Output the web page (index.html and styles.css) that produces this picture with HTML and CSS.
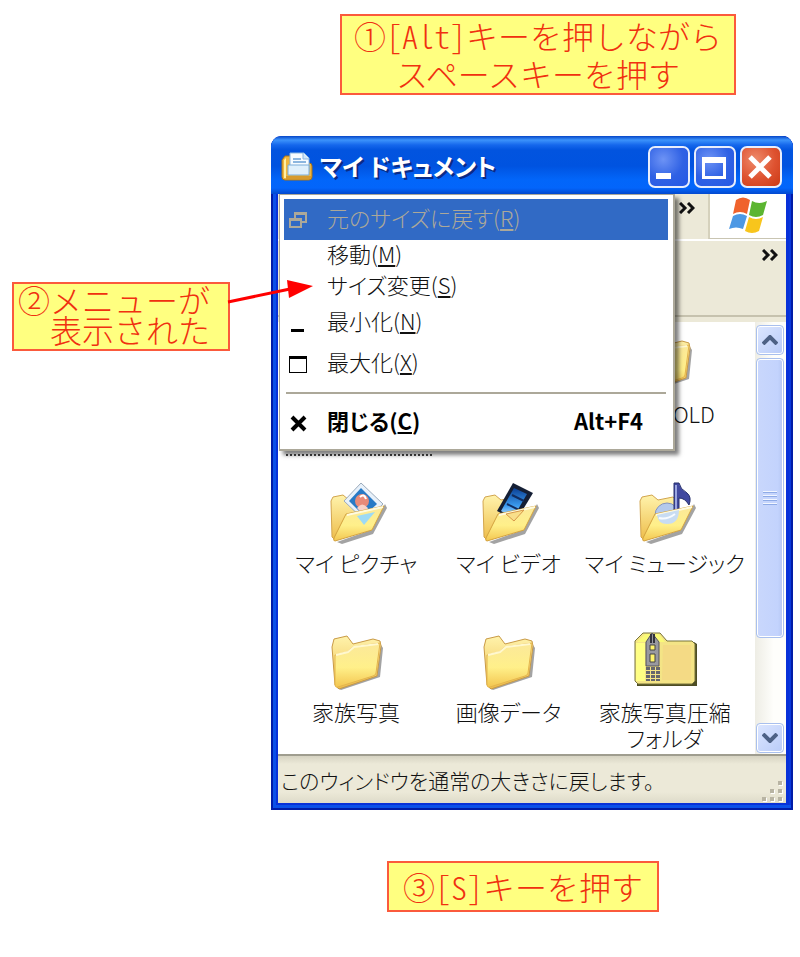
FILE: index.html
```html
<!DOCTYPE html>
<html lang="ja">
<head>
  <meta charset="UTF-8" />
  <meta name="viewport" content="width=device-width, initial-scale=1" />
  <title>マイ ドキュメント</title>
  <link rel="stylesheet" href="styles.css">
</head>
<body>
  <!-- shared icon shapes -->
  <svg class="defs" aria-hidden="true">
    <defs>
      <linearGradient id="paper" x1="0" y1="0" x2="0" y2="1">
        <stop offset="0" stop-color="#fbe89a" />
        <stop offset="0.55" stop-color="#fff08a" />
        <stop offset="1" stop-color="#f3c650" />
      </linearGradient>
      <linearGradient id="back" x1="0" y1="0" x2="0" y2="1">
        <stop offset="0" stop-color="#fff3ac" />
        <stop offset="1" stop-color="#eebd4a" />
      </linearGradient>
      <linearGradient id="film" x1="0" y1="0" x2="0" y2="1">
        <stop offset="0" stop-color="#0b3f94" />
        <stop offset="0.6" stop-color="#3b9cf0" />
        <stop offset="1" stop-color="#d9f1ff" />
      </linearGradient>
      <symbol id="folder" viewBox="0 0 64 64">
        <path d="M13 59l40-13 4-30 2 3-3 29-39 13z" fill="#666" opacity="0.6" />
        <path d="M8 18l2-8 13-3 6 8 20-5 7 2 1 5-4 30-38 13-4-4z" fill="url(#back)" stroke="#c99a45" />
        <path d="M11 26l12-3 6-5 27-4-4 30q0 2-3 3L14 58q-3 1-3-3z" fill="url(#paper)" stroke="#e4b54c" />
        <path d="M12 26l12-3 6-5 24-3" fill="none" stroke="#fff8cf" stroke-width="2" />
      </symbol>
      <symbol id="open-back" viewBox="0 0 64 64">
        <path d="M13 62l34-12 14-26 2 4-14 26-31 10z" fill="#666" opacity="0.6" />
        <path d="M7 21l2-4 10-2 6 5 15-3 5 4v28L11 60l-3-3z" fill="url(#back)" stroke="#d2a54e" />
      </symbol>
      <symbol id="open-front" viewBox="0 0 64 64">
        <path d="M22 34l38-8-12 24-37 11q-2 0-1-3z" fill="url(#paper)" stroke="#d3a23f" />
        <path d="M23 35l36-8" stroke="#fffbe0" stroke-width="2" />
      </symbol>
    </defs>
  </svg>

  <main class="guide">
    <p class="callout step1">①[Alt]キーを押しながら<br />スペースキーを押す</p>

    <div class="callout step2">
      <div>②メニューが</div>
      <div class="indent">表示された</div>
      <svg class="arrow" viewBox="0 0 86 30" aria-hidden="true">
        <path d="M0 18L62 5" stroke="#f00" stroke-width="3" />
        <path d="M59 -4l26 6-24 12z" fill="#f00" />
      </svg>
    </div>

    <section class="window">
      <header class="titlebar">
        <svg class="title-icon" viewBox="0 0 32 32" aria-hidden="true">
          <path d="M1 9l3-4h8v7h16q3 0 3 3v11q0 3-3 3H4q-3 0-3-3z" fill="#efb63e" stroke="#a87219" />
          <path d="M3 9l2-2v20H3z" fill="#fff0a5" />
          <path d="M9 2h14l5 5v14H9z" fill="#f7fcff" stroke="#8bb6e0" />
          <path d="M22 2v6h6" fill="#cfe6fa" stroke="#8bb6e0" />
          <path d="M12 8h8M12 11h13" stroke="#8cb6df" stroke-width="2" />
          <path d="M7 14h21v10H7z" fill="#dff0fc" stroke="#7dadd8" />
          <path d="M5 25h25v3H5z" fill="#d79b2e" />
        </svg>
        <h1>マイ ドキュメント</h1>
        <div class="controls">
          <button type="button" aria-label="最小化">
            <svg viewBox="0 0 36 36"><path d="M6 24h15v6H6z" fill="#fff" /></svg>
          </button>
          <button type="button" aria-label="最大化">
            <svg viewBox="0 0 36 36"><path d="M6 8h24v22H6zM9 14v13h18V14z" fill="#fff" fill-rule="evenodd" /></svg>
          </button>
          <button type="button" class="close" aria-label="閉じる">
            <svg viewBox="0 0 36 36"><path d="M8 8l20 20M28 8L8 28" stroke="#fff" stroke-width="5" /></svg>
          </button>
        </div>
      </header>

      <div class="client">
        <div class="menubar">
          <button type="button" class="more" aria-label="その他のメニュー">
            <svg viewBox="0 0 16 12"><path d="M1 1l5 5-5 5M9 1l5 5-5 5" /></svg>
          </button>
          <div class="flag">
            <svg viewBox="0 0 40 38" aria-hidden="true">
              <path d="M8 3q7-5 14 0l-3 14q-7-4-14 0z" fill="#f0622c" />
              <path d="M24 4q7 4 15 0l-4 14q-7 4-14 0z" fill="#5cb531" />
              <path d="M5 19q7-4 14 0l-4 13Q8 29 1 32z" fill="#4c98e4" />
              <path d="M21 20q7 4 14 0l-4 14q-7 4-14 0z" fill="#f8c51c" />
            </svg>
          </div>
        </div>
        <div class="toolbar">
          <button type="button" class="more" aria-label="その他のボタン">
            <svg viewBox="0 0 16 12"><path d="M1 1l5 5-5 5M9 1l5 5-5 5" /></svg>
          </button>
        </div>

        <div class="content">
          <div class="files">
            <div class="file selected"></div>
            <div class="file"></div>
            <div class="file partial">
              <svg viewBox="0 0 64 64" aria-hidden="true"><use href="#folder" /></svg>
              <span>OLD</span>
            </div>
            <div class="file">
              <svg viewBox="0 0 64 64" aria-hidden="true">
                <use href="#open-back" />
                <path d="M37 3l22 21-18 17-21-20z" fill="#e8f1fa" stroke="#9cacbd" />
                <path d="M37 8l16 16-13 12-15-15z" fill="#277ac6" />
                <circle cx="38" cy="21" r="7" fill="#e88a78" />
                <path d="M33 28q5-7 11 0l-4 8z" fill="#f8d2c7" />
                <path d="M36 17q4-4 6 2" fill="none" stroke="#fff" stroke-width="2" />
                <use href="#open-front" />
                <path d="M33 36l18-4-11 13z" fill="#9ddaf5" />
              </svg>
              <span>マイ ピクチャ</span>
            </div>
            <div class="file">
              <svg viewBox="0 0 64 64" aria-hidden="true">
                <use href="#open-back" />
                <path d="M37 3l20 10-17 28-19-10z" fill="#151f35" />
                <path d="M38 8l13 6-14 24-12-7z" fill="url(#film)" />
                <path d="M36 15l12 6M31 24l12 6" stroke="#102c60" stroke-width="2" />
                <use href="#open-front" />
                <path d="M30 34l18-4-10 11z" fill="#f9df8a" stroke="#d79848" />
              </svg>
              <span>マイ ビデオ</span>
            </div>
            <div class="file">
              <svg viewBox="0 0 64 64" aria-hidden="true">
                <use href="#open-back" />
                <circle cx="34" cy="35" r="12" fill="#b3c9ed" stroke="#8594bd" />
                <path d="M41 3h5q1 6 8 10 5 4 2 12-4-7-10-7v14h-5z" fill="#4149a0" stroke="#26306c" />
                <path d="M43 5v26" stroke="#9ba6e0" stroke-width="2" />
                <use href="#open-front" />
                <path d="M24 35l22-5q0 14-12 14-9 0-10-9z" fill="#c8dcf2" />
                <path d="M26 38q8 2 16-4" fill="none" stroke="#f7fbff" stroke-width="2" />
              </svg>
              <span>マイ ミュージック</span>
            </div>
            <div class="file">
              <svg viewBox="0 0 64 64" aria-hidden="true"><use href="#folder" /></svg>
              <span>家族写真</span>
            </div>
            <div class="file">
              <svg viewBox="0 0 64 64" aria-hidden="true"><use href="#folder" /></svg>
              <span>画像データ</span>
            </div>
            <div class="file">
              <svg viewBox="0 0 64 64" aria-hidden="true">
                <path d="M4 57h60V15l-3-2v41H4z" fill="#4d4d24" />
                <path d="M2 12l8-8h17l7 8h25l3 3v37l-3 3H5l-3-3z" fill="#f4e486" stroke="#77743a" />
                <path d="M4 13l8-8h14l6 8z" fill="#fafa76" />
                <path d="M3 14h9v38H3z" fill="#ffff84" />
                <path d="M30 16h28v35H29z" fill="#f4cf83" opacity="0.5" />
                <path d="M13 13l6-9 7 9v24H13z" fill="#9999a0" stroke="#55555d" />
                <path d="M18 5v9M21 5v9" stroke="#34343d" stroke-width="2" />
                <path d="M17 16h5v5h-5zM17 25h5v8h-5z" fill="#fff36a" stroke="#444" />
                <path d="M15 38v14M20 38v14M25 38v14" stroke="#66666d" stroke-width="4" stroke-dasharray="3 1" />
              </svg>
              <span>家族写真圧縮<br />フォルダ</span>
            </div>
          </div>

          <div class="scrollbar">
            <button type="button" aria-label="上へスクロール">
              <svg viewBox="0 0 16 10"><path d="M1 9l7-7 7 7" /></svg>
            </button>
            <div class="thumb"><i></i><i></i><i></i><i></i></div>
            <button type="button" class="down" aria-label="下へスクロール">
              <svg viewBox="0 0 16 10"><path d="M1 1l7 7 7-7" /></svg>
            </button>
          </div>
        </div>

        <footer class="statusbar">
          <span>このウィンドウを通常の大きさに戻します。</span>
          <svg class="grip" viewBox="0 0 22 22" aria-hidden="true">
            <path d="M17 1h4v4h-4zM9 9h4v4H9zM17 9h4v4h-4zM1 17h4v4H1zM9 17h4v4H9zM17 17h4v4h-4z" fill="#fff" />
            <path d="M16 0h4v4h-4zM8 8h4v4H8zM16 8h4v4h-4zM0 16h4v4H0zM8 16h4v4H8zM16 16h4v4h-4z" fill="#b8b4a3" />
          </svg>
        </footer>

        <div class="menu" role="menu">
          <button type="button" role="menuitem" class="item active">
            <svg viewBox="0 0 18 18"><path d="M6 2h11v9h-4M6 7V1M6 3h11M1 8h11v8H1zM1 9h11" fill="none" stroke="#aca899" stroke-width="2" /></svg>
            <span>元のサイズに戻す(<u>R</u>)</span>
          </button>
          <button type="button" role="menuitem" class="item tight">
            <svg viewBox="0 0 18 18"></svg>
            <span>移動(<u>M</u>)</span>
          </button>
          <button type="button" role="menuitem" class="item tight">
            <svg viewBox="0 0 18 18"></svg>
            <span>サイズ変更(<u>S</u>)</span>
          </button>
          <button type="button" role="menuitem" class="item">
            <svg viewBox="0 0 18 18"><path d="M2 15h13v3H2z" /></svg>
            <span>最小化(<u>N</u>)</span>
          </button>
          <button type="button" role="menuitem" class="item">
            <svg viewBox="0 0 18 18"><path d="M0 1h18v17H0zM1 4v13h16V4z" fill-rule="evenodd" /></svg>
            <span>最大化(<u>X</u>)</span>
          </button>
          <hr />
          <button type="button" role="menuitem" class="item default">
            <svg viewBox="0 0 18 18"><path d="M3 3l13 13M16 3L3 16" stroke="#000" stroke-width="4" /></svg>
            <span>閉じる(<u>C</u>)</span>
            <kbd>Alt+F4</kbd>
          </button>
        </div>
      </div>
    </section>

    <p class="callout step3">③[S]キーを押す</p>
  </main>
</body>
</html>
```
FILE: styles.css
```css
* {
  box-sizing: border-box;
}
body {
  margin: 0;
  background: #fff;
  color: #111;
  font-family: "Noto Sans CJK JP", sans-serif;
  font-size: 22px;
  font-weight: 300;
}
button {
  margin: 0;
  padding: 0;
  border: none;
  background: none;
  color: inherit;
  font: inherit;
}
svg {
  display: block;
}
.defs {
  position: absolute;
  width: 0;
  height: 0;
}

/* page */
.guide {
  display: grid;
  grid-template-columns: 271px 1fr;
  padding: 14px 7px 40px 0;
}
.callout {
  margin: 0;
  border: 2px solid #fb5a3c;
  background: #ffff80;
  color: #f03010;
  font-size: 32px;
  font-feature-settings: "hwid";
  white-space: nowrap;
}
.step1 {
  grid-column: 2;
  justify-self: center;
  margin-left: 12px;
  padding: 0 12px 1px;
  line-height: 38px;
  text-align: center;
}
.step2 {
  position: relative;
  z-index: 1;
  align-self: start;
  margin: 187px 41px 0 12px;
  padding: 0 4px 5px;
  line-height: 30px;
}
.indent {
  padding-left: 1em;
}
.step3 {
  grid-column: 2;
  justify-self: center;
  margin: 51px 18px 0 0;
  padding: 0 14px;
  line-height: 47px;
}
.arrow {
  position: absolute;
  left: 100%;
  top: 0;
  width: 86px;
  height: 30px;
  overflow: visible;
}

/* window */
.window {
  margin-top: 41px;
  padding: 0 7px 7px;
  border-radius: 11px 11px 0 0;
  background: #0831d9;
  box-shadow: inset 2px -2px #001ca8, inset -2px 0 #001ca8, inset 5px -5px #0b50e8, inset -4px 0 #0838dc;
  font-feature-settings: "palt";
}
.titlebar {
  display: flex;
  align-items: center;
  height: 58px;
  margin: 0 -7px;
  padding: 4px 11px 0 10px;
  border-radius: 11px 11px 0 0;
  background: linear-gradient(#0646c8 0, #3c93fb 4px, #1567ec 9px, #0254df 14px, #0053e0 30px, #0266fa 44px, #0365fb 52px, #0349cf 58px);
  color: #fff;
}
.title-icon {
  width: 32px;
  height: 32px;
}
.titlebar h1 {
  flex: 1;
  margin: 0 0 3px 7px;
  font-size: 24px;
  line-height: 30px;
  text-shadow: 2px 2px #0a2b86;
}
.controls {
  display: flex;
  gap: 4px;
}
.controls button {
  width: 42px;
  height: 42px;
  border: 2px solid #e8eefc;
  border-radius: 7px;
  background: radial-gradient(circle at 35% 30%, #6d93f5, #2f61e4 55%, #2458e6);
}
.controls .close {
  background: radial-gradient(circle at 35% 30%, #ee8a6a, #de5230 55%, #cb3a16);
}
.controls svg {
  width: 36px;
  height: 36px;
}
.client {
  position: relative;
  background: #ece9d8;
}

/* bars under the title */
.more svg {
  width: 16px;
  height: 12px;
  fill: none;
  stroke: #111;
  stroke-width: 3;
}
.menubar {
  display: flex;
  justify-content: flex-end;
  height: 47px;
  border-bottom: 2px solid #fff;
}
.menubar .more {
  align-self: flex-start;
  padding: 8px 13px 0 0;
}
.flag {
  display: flex;
  justify-content: center;
  width: 78px;
  padding-top: 3px;
  border-left: 2px solid #d5d1bc;
  border-bottom: 1px solid #c9c5b2;
  background: #fff;
}
.flag svg {
  width: 40px;
  height: 38px;
}
.toolbar {
  display: flex;
  justify-content: flex-end;
  align-items: flex-start;
  height: 76px;
  padding: 8px 8px 0 0;
  border-bottom: 2px solid #c6c2ae;
}

/* files */
.content {
  display: flex;
  margin-top: 5px;
  background: #fff;
}
.files {
  flex: 1;
  display: grid;
  grid-template-columns: repeat(3, 1fr);
  grid-template-rows: 149px 149px auto;
  padding: 9px 10px 4px 2px;
}
.file {
  display: flex;
  flex-direction: column;
  align-items: center;
  gap: 5px;
  line-height: 26px;
  text-align: center;
  white-space: nowrap;
}
.file svg {
  width: 64px;
  height: 64px;
}
.file.partial span {
  padding-left: 58px;
}
.file.selected {
  width: 146px;
  height: 125px;
  margin-left: 6px;
  border-bottom: 2px dotted #444;
}
.scrollbar {
  display: flex;
  flex-direction: column;
  gap: 3px;
  width: 31px;
  padding: 3px 2px 1px 1px;
  background: linear-gradient(90deg, #eeede5, #fefefb 60%);
}
.scrollbar button,
.thumb {
  display: flex;
  flex-direction: column;
  align-items: center;
  justify-content: center;
  border: 1px solid #a9c0ee;
  border-radius: 4px;
  box-shadow: inset 0 0 0 1px #fff;
  background: linear-gradient(135deg, #dce6ff, #b9cbf8);
}
.scrollbar button {
  height: 30px;
}
.scrollbar button svg {
  width: 16px;
  height: 10px;
  fill: none;
  stroke: #4d6185;
  stroke-width: 4;
}
.scrollbar .down {
  margin-top: auto;
}
.thumb {
  height: 280px;
  gap: 2px;
  background: linear-gradient(90deg, #c9d7fc, #c3d3fd 80%, #b5c7f3);
}
.thumb i {
  width: 14px;
  height: 2px;
  border-top: 1px solid #f2f6ff;
  border-bottom: 1px solid #8fabe6;
}
.statusbar {
  display: flex;
  justify-content: space-between;
  align-items: center;
  height: 49px;
  padding: 0 2px 0 3px;
  border-top: 2px solid #9f9d8f;
  background: linear-gradient(#d6d3c2, #ece9d8 8px, #ece9d8 36px, #dedbc9);
  font-size: 21px;
  line-height: 26px;
  white-space: nowrap;
}
.grip {
  align-self: flex-end;
  width: 22px;
  height: 22px;
}

/* system menu */
.menu {
  position: absolute;
  top: 0;
  left: 1px;
  width: 396px;
  padding: 4px 5px 6px 4px;
  border: solid #aca899;
  border-width: 1px 2px 2px 1px;
  background: #fff;
  box-shadow: 4px 4px 4px rgba(0,0,0,0.5);
}
.item {
  display: flex;
  align-items: center;
  gap: 20px;
  width: 100%;
  height: 41px;
  padding: 0 25px 0 5px;
  line-height: 24px;
  white-space: nowrap;
}
.item.tight {
  height: 31px;
}
.item svg {
  width: 18px;
  height: 18px;
}
.item span,
.item kbd {
  padding-bottom: 6px;
}
.item u {
  text-decoration-thickness: 2px;
  text-underline-offset: 2px;
}
.item.active {
  background: #316ac5;
  color: #aca899;
}
.item.default {
  color: #000;
  font-weight: bold;
}
.item kbd {
  margin-left: auto;
  font: inherit;
}
.menu hr {
  height: 2px;
  margin: 8px 2px;
  border: none;
  background: #aca899;
}
```
